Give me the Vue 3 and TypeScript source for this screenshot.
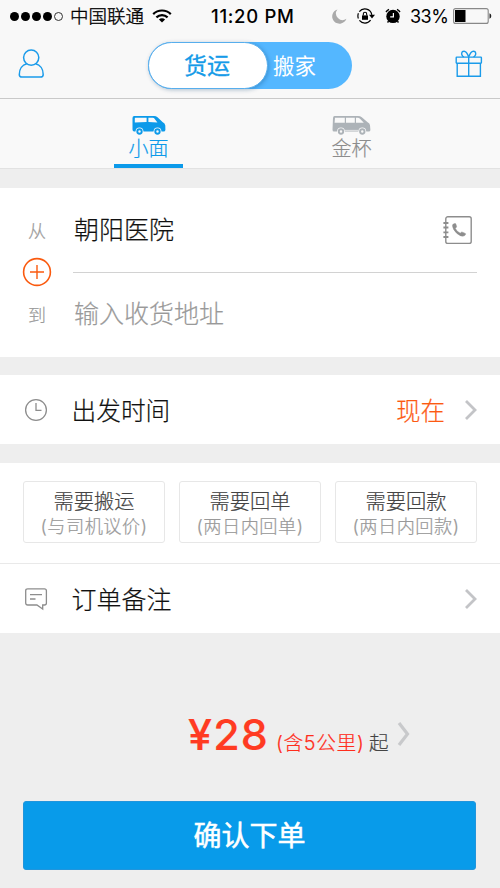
<script setup lang="ts">
interface Option {
  title: string
  note: string
}

const filledDots = 4
const options: Option[] = [
  { title: '需要搬运', note: '(与司机议价)' },
  { title: '需要回单', note: '(两日内回单)' },
  { title: '需要回款', note: '(两日内回款)' },
]
</script>

<template>
  <div class="screen">
    <header class="top">
      <div class="status">
        <div class="signal">
          <i v-for="n in 5" :key="n" class="dot" :class="{ hollow: n > filledDots }"></i>
        </div>
        <span class="carrier">中国联通</span>
        <svg class="wifi" width="20" height="14" viewBox="0 0 20 14" fill="none" stroke="#000" stroke-width="2.2">
          <path d="M1.2 5.1a12.6 12.6 0 0 1 17.6 0" />
          <path d="M4.4 8.4a8 8 0 0 1 11.2 0" />
          <path d="M10 13.6L6.9 10.6a4.4 4.4 0 0 1 6.2 0z" fill="#000" stroke="none" />
        </svg>
        <span class="clock">11:20 PM</span>
        <svg class="moon" width="15" height="15" viewBox="0 0 15 15">
          <path d="M5.4.4A7.3 7.3 0 1 0 14.4 9.8A6.6 6.6 0 0 1 5.4.4z" fill="#aaa" />
        </svg>
        <svg class="lock" width="18" height="16" viewBox="0 0 18 16" fill="none" stroke="#000">
          <path d="M14.8 6.8A7 7 0 0 0 2.3 3.7M1.4 5.3A7 7 0 0 0 1.4 10.5M2.4 12.4A7 7 0 0 0 13.6 12.1" stroke-width="1.2" />
          <path d="M12 6.8h6l-3 3.6z" fill="#000" stroke="none" />
          <path d="M5 7.4h6v4.4H5z" fill="#000" stroke="none" />
          <path d="M6.3 7.5V5.9a1.7 1.7 0 0 1 3.4 0v1.6" stroke-width="1.1" />
        </svg>
        <svg class="alarm" width="16" height="16" viewBox="0 0 16 16">
          <circle cx="8" cy="8.4" r="6.7" fill="#000" />
          <path d="M1 4A8 8 0 0 1 4 1.3M12 1.3a8 8 0 0 1 3 2.7M3.6 13.2l-1.1 1.3M12.4 13.2l1.1 1.3" stroke="#000" stroke-width="1.4" fill="none" />
          <path d="M8.4 5v3.9H5.2" stroke="#fff" stroke-width="1.2" fill="none" />
        </svg>
        <span class="percent">33%</span>
        <svg class="battery" width="39" height="16" viewBox="0 0 39 16">
          <rect x=".6" y=".6" width="34.6" height="14.8" rx="2" fill="none" stroke="#888" stroke-width="1.1" />
          <rect x="2" y="2" width="10.5" height="12" fill="#000" />
          <path d="M36.5 5.2q1.8.6 1.8 2.8t-1.8 2.8z" fill="#222" />
        </svg>
      </div>

      <nav class="nav">
        <svg class="person" width="28" height="30" viewBox="0 0 28 30" fill="none" stroke="#1a9bea" stroke-width="1.5">
          <circle cx="13.2" cy="8.6" r="7.6" />
          <path d="M8.8 14.7C4.3 15.8 1.3 20 1.3 25.4Q1.3 28 4 28H22.5Q25.2 28 25.2 25.4C25.2 20 22.1 15.8 17.6 14.7" />
        </svg>
        <div class="switch">
          <span class="switch-on">货运</span>
          <span class="switch-off">搬家</span>
        </div>
        <svg class="gift" width="28" height="28" viewBox="0 0 28 28" fill="none" stroke="#1a9bea" stroke-width="1.4">
          <rect x="1.2" y="7.1" width="25.2" height="6.1" rx=".6" />
          <path d="M2.2 13.2V26.2H25.4V13.2M13.7 7.1V26.2" />
          <path d="M13.7 7C12.5 3.7 11 1.2 9 1.2C6.2 1.2 6 4.4 7.8 6.2L8.9 7M13.7 7C14.9 3.7 16.4 1.2 18.4 1.2C21.2 1.2 21.4 4.4 19.6 6.2L18.5 7" />
        </svg>
      </nav>
    </header>

    <div class="tabs">
      <div class="tab active">
        <svg width="34" height="20" viewBox="0 0 34 20">
          <path fill="currentColor" fill-rule="evenodd" d="M2.2 0H22q2 0 3.5 1.3l5 4.7q2.6 1 2.8 3.5l.1 4.4q-.1 1.7-1.8 1.7H2.2Q.5 15.6.5 13.6V2Q.5 0 2.2 0zM3.4 1.8Q2.8 1.8 2.8 2.4V6.6l11.8-.6V1.8zM16.4 1.8v4.2l9 .6-2.8-3.8Q21.9 1.8 20.8 1.8z" />
          <circle cx="7.5" cy="15.3" r="3.9" fill="#f9f9f9" />
          <circle cx="25.5" cy="15.3" r="3.9" fill="#f9f9f9" />
          <circle cx="7.5" cy="15.5" r="2.2" fill="#f9f9f9" stroke="currentColor" stroke-width="1.9" />
          <circle cx="25.5" cy="15.5" r="2.2" fill="#f9f9f9" stroke="currentColor" stroke-width="1.9" />
        </svg>
        <span>小面</span>
      </div>
      <div class="tab">
        <svg width="39" height="20" viewBox="0 0 39 20">
          <path fill="#adb3b8" fill-rule="evenodd" d="M2.5 0H26q2.2 0 3.8 1.2l5.8 5q2.2.9 2.4 3l.4 4.7q0 1.7-1.8 1.7H2Q.5 15.6.5 13.7L1 2Q1.2 0 2.5 0zM3 1.8l-.4 5h10.2v-5zM14 1.8v5h8.8v-5zM24 1.8v5h7.8L28 2.7Q27 1.8 25.8 1.8z" />
          <circle cx="9" cy="15.3" r="3.9" fill="#f9f9f9" />
          <circle cx="30.3" cy="15.3" r="3.9" fill="#f9f9f9" />
          <path d="M13 14.4h13.4" stroke="#f9f9f9" stroke-width=".7" />
          <circle cx="9" cy="15.5" r="2.2" fill="#f9f9f9" stroke="#adb3b8" stroke-width="1.9" />
          <circle cx="30.3" cy="15.5" r="2.2" fill="#f9f9f9" stroke="#adb3b8" stroke-width="1.9" />
        </svg>
        <span>金杯</span>
      </div>
    </div>

    <section class="address">
      <div class="address-row">
        <span class="label">从</span>
        <span class="place">朝阳医院</span>
        <svg class="book" width="30" height="29" viewBox="0 0 30 29" fill="none" stroke="#8d8d8d">
          <rect x="2.8" y=".8" width="25.4" height="26.6" rx="2" stroke-width="1.4" />
          <path d="M.4 7h5M.4 11.5h5M.4 16.3h5M.4 21h5" stroke-width="1.8" />
          <path d="M10.3 8.1l1.7-.6q.6-.1.8.5l.8 2.6q.1.6-.4.9l-1 .8q1.5 3.4 5 4.9l1.2-1q.5-.3 1 0l2.9 1.2q.5.3.3.9-.5 1.5-2.4 1.8-2.8.3-6.3-2.7-4.2-4-4.4-7.7 0-1 .8-1.6z" fill="#8d8d8d" stroke="#8d8d8d" stroke-width=".5" />
        </svg>
      </div>
      <div class="divider">
        <svg width="30" height="30" viewBox="0 0 30 30" fill="none" stroke="#fa5a0f">
          <circle cx="15" cy="15" r="13.4" stroke-width="1.6" />
          <path d="M8 15h14M15 8v14" stroke-width="1.4" />
        </svg>
        <div class="line"></div>
      </div>
      <div class="address-row second">
        <span class="label">到</span>
        <span class="place empty">输入收货地址</span>
      </div>
    </section>

    <section class="row time">
      <svg class="row-icon" width="24" height="24" viewBox="0 0 24 24" fill="none" stroke="#8d8d8d" stroke-width="1.3">
        <circle cx="12" cy="12" r="10.4" />
        <path d="M12 5v7.3h5.5" />
      </svg>
      <span class="row-title">出发时间</span>
      <span class="now">现在</span>
      <svg class="chevron" width="14" height="22" viewBox="0 0 14 22" fill="none" stroke="#c3c4c7" stroke-width="2.8">
        <path d="M2 2L11 11L2 20" />
      </svg>
    </section>

    <section class="options">
      <div v-for="option in options" :key="option.title" class="option">
        <span class="option-title">{{ option.title }}</span>
        <span class="option-note">{{ option.note }}</span>
      </div>
    </section>

    <section class="row remark">
      <svg class="row-icon" width="24" height="24" viewBox="0 0 24 24" fill="none" stroke="#8d8d8d" stroke-width="1.3">
        <path d="M3.7 1.8H20.4q2 0 2 2V16q0 2-2 2H18.7V22L12.9 18H3.7q-2 0-2-2V3.8q0-2 2-2z" />
        <path d="M6 7.6h12M6 12h5.5" />
      </svg>
      <span class="row-title">订单备注</span>
      <svg class="chevron" width="14" height="22" viewBox="0 0 14 22" fill="none" stroke="#c3c4c7" stroke-width="2.8">
        <path d="M2 2L11 11L2 20" />
      </svg>
    </section>

    <footer class="footer">
      <div class="price">
        <span class="amount">¥28</span>
        <span class="included">(含5公里)</span>
        <span class="from">起</span>
        <svg class="price-chevron" width="14" height="26" viewBox="0 0 14 26" fill="none" stroke="#c8c9cb" stroke-width="3.2">
          <path d="M2 2L10.5 13L2 24" />
        </svg>
      </div>
      <button class="confirm" type="button">确认下单</button>
    </footer>
  </div>
</template>

<style>
body {
  margin: 0;
  background: #eeeeee;
}
</style>

<style scoped>
.screen {
  width: 500px;
  height: 888px;
  overflow: hidden;
  display: flex;
  flex-direction: column;
  background: #eeeeee;
  font-family: Inter, 'Noto Sans CJK SC', sans-serif;
  font-weight: 300;
  -webkit-text-stroke: 0.2px currentColor;
  white-space: nowrap;
}
.screen * {
  box-sizing: border-box;
  flex-shrink: 0;
}
svg {
  display: block;
}
.top {
  height: 99px;
  background: #f8f8f8;
  border-bottom: 1.5px solid #c9c9c9;
}
.status {
  height: 32px;
  display: flex;
  align-items: center;
  padding-left: 10px;
  color: #000;
  -webkit-text-stroke: 0;
}
.signal {
  display: flex;
  gap: 2px;
  width: 60px;
}
.dot {
  width: 9px;
  height: 9px;
  border-radius: 50%;
  background: #000;
}
.dot.hollow {
  background: none;
  border: 1px solid #333;
}
.carrier {
  width: 82px;
  font-size: 18.5px;
  line-height: 32px;
  font-weight: 300;
  -webkit-text-stroke: 0.35px currentColor;
}
.wifi {
  margin-right: 39px;
}
.clock {
  width: 121px;
  font-weight: 500;
  font-size: 18.5px;
  letter-spacing: 0.7px;
}
.moon {
  margin-right: 10px;
}
.lock {
  margin-right: 10px;
}
.alarm {
  margin-right: 9px;
}
.percent {
  width: 43px;
  font-weight: 400;
  font-size: 18px;
  letter-spacing: -0.5px;
}
.nav {
  height: 66px;
  display: flex;
  align-items: center;
  padding: 0 17px 0 18px;
}
.switch {
  width: 204px;
  height: 47px;
  margin: 1px 103px 0 102px;
  border-radius: 24px;
  background: #54b7ff;
  display: flex;
}
.switch-on {
  width: 120px;
  padding-right: 2px;
  border: 1.5px solid #57aeed;
  border-radius: 24px;
  background: #fff;
  box-shadow: 1px 1px 4px rgba(0, 60, 110, 0.3);
  color: #159be8;
  font-size: 23px;
  font-weight: 400;
  -webkit-text-stroke: 0.3px currentColor;
  line-height: 47px;
  text-align: center;
}
.switch-off {
  margin-left: 5px;
  color: #fff;
  font-size: 21.5px;
  font-weight: 400;
  -webkit-text-stroke: 0;
  line-height: 48px;
}
.person {
  margin-bottom: 2px;
}
.gift {
  margin-bottom: 2px;
}
.tabs {
  height: 70px;
  display: flex;
  justify-content: space-between;
  padding: 0 114px;
  background: #f9f9f9;
  border-bottom: 1px solid #e2e2e2;
}
.tab {
  width: 69px;
  display: flex;
  flex-direction: column;
  align-items: center;
  padding-top: 17px;
  color: #8c8c8c;
  font-size: 20px;
  line-height: 27px;
}
.tab.active {
  color: #0c9aea;
  border-bottom: 4px solid #0c9aea;
}
.address {
  height: 169px;
  margin-top: 19px;
  background: #fff;
}
.address-row {
  height: 84px;
  display: flex;
  align-items: center;
  padding: 0 27px 0 28px;
}
.label {
  width: 46px;
  padding-bottom: 1px;
  color: #999;
  font-size: 18px;
}
.place {
  padding-top: 1px;
  color: #111;
  font-size: 25px;
  line-height: 37px;
}
.place.empty {
  color: #999;
}
.book {
  margin-left: auto;
}
.divider {
  height: 0;
  display: flex;
  align-items: center;
  padding-left: 22px;
  gap: 21px;
}
.line {
  width: 404px;
  height: 1px;
  background: #d2d2d2;
}
.row {
  height: 69px;
  display: flex;
  align-items: center;
  padding: 0 22px 0 24px;
  background: #fff;
}
.time {
  margin-top: 18px;
}
.row-title {
  margin-left: 23.5px;
  margin-right: auto;
  padding-top: 2px;
  color: #111;
  font-size: 24.7px;
  line-height: 36px;
}
.now {
  margin-right: 19px;
  padding-top: 2px;
  color: #fc5a12;
  font-size: 24.5px;
  line-height: 36px;
}
.options {
  height: 100px;
  margin-top: 19px;
  padding: 18px 23px 0;
  display: flex;
  justify-content: space-between;
  background: #fff;
}
.option {
  width: 142px;
  height: 62px;
  padding-top: 7px;
  border: 1.5px solid #e7e7e7;
  border-radius: 3px;
  display: flex;
  flex-direction: column;
  align-items: center;
}
.option-title {
  color: #444;
  font-size: 20.3px;
  line-height: 25px;
}
.option-note {
  color: #999;
  font-size: 18.2px;
  letter-spacing: 0.5px;
  line-height: 25px;
}
.remark {
  height: 70px;
  border-top: 1.5px solid #e9e9e9;
}
.remark .row-title {
  font-size: 25px;
}
.footer {
  flex: 1;
  padding: 74px 23px 0;
}
.price {
  height: 94px;
  display: flex;
  align-items: baseline;
  padding-left: 165px;
}
.amount {
  width: 88px;
  color: #ff3b22;
  font-weight: 500;
  font-size: 43px;
  letter-spacing: 1.2px;
  line-height: 54px;
}
.included {
  width: 93px;
  color: #ff2d1c;
  font-size: 19.8px;
  letter-spacing: 0.6px;
}
.from {
  width: 28px;
  color: #444;
  font-size: 19.5px;
}
.price-chevron {
  align-self: flex-start;
  margin-top: 14px;
}
.confirm {
  display: block;
  width: 453px;
  height: 69px;
  padding: 2px 0 0;
  border: 1px solid #2195dc;
  border-radius: 3px;
  background: #089bea;
  color: #fff;
  font: 400 28px/65px Inter, 'Noto Sans CJK SC', sans-serif;
  -webkit-text-stroke: 0.5px currentColor;
}
</style>
